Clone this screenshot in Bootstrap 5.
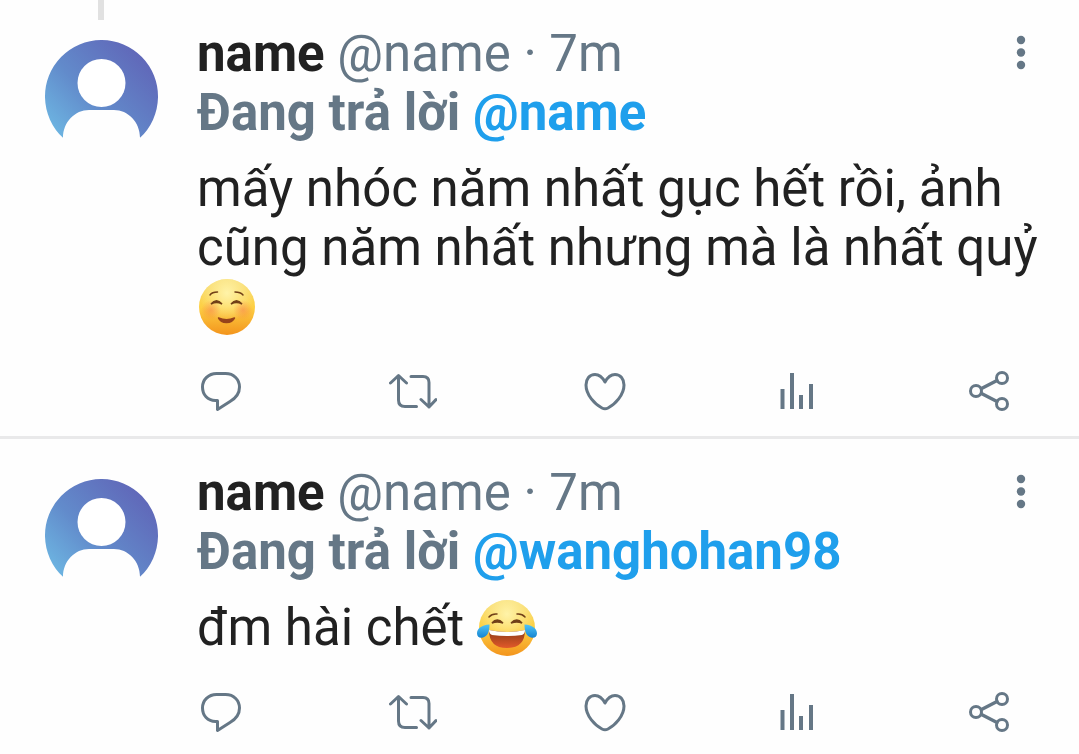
<!DOCTYPE html>
<html lang="vi">
<head>
<meta charset="utf-8">
<meta name="viewport" content="width=device-width, initial-scale=1">
<title>Replies</title>
<link href="https://cdn.jsdelivr.net/npm/bootstrap@5.3.0/dist/css/bootstrap.min.css" rel="stylesheet">
<style>
  body { font-family: Roboto, "Liberation Sans", sans-serif; font-size: 51px; line-height: 59px; color: #212121; background: #fefefe; overflow-x: hidden; }
  .tweet { padding: 24px 34px 21px 45px; border-bottom: 3px solid #e9e9ea; }
  .tweet:last-child { border-bottom: 0; }
  .tweet-avatar { width: 113px; margin: 16px 39px 0 0; }
  .thread-line { position: absolute; top: 0; left: 98px; width: 6px; height: 20px; background: #e1e1e1; }
  .muted-ink { color: #657786; }
  .mention { color: #1f9fec; }
  .tweet-body { margin-top: 17px; }
  .tweet-actions { margin: 31px 32px 0 0; }
  .icon-btn { color: #657786; background: none; border: 0; padding: 0; line-height: 0; }
  .icon-btn svg { fill: none; stroke: currentColor; stroke-width: 3; stroke-linecap: round; stroke-linejoin: round; }
  .more-btn { margin-top: 9px; width: 48px; }
  .emoji { width: 60px; height: 58px; vertical-align: -12px; }
</style>
</head>
<body>
<svg width="0" height="0" class="position-absolute" aria-hidden="true">
  <defs>
    <linearGradient id="avatarFill" x1="0" y1=".8" x2=".85" y2=".1"><stop offset="0" stop-color="#6cb2e0"/><stop offset=".4" stop-color="#628bcb"/><stop offset="1" stop-color="#6066b8"/></linearGradient>
    <linearGradient id="faceFill" x1="0" y1="0" x2="0" y2="1"><stop offset="0" stop-color="#f6da70"/><stop offset=".5" stop-color="#fdd044"/><stop offset="1" stop-color="#f3941c"/></linearGradient>
    <radialGradient id="faceGlow" cx=".5" cy=".25" r=".5"><stop offset="0" stop-color="#fff3a8"/><stop offset="1" stop-color="#fff3a8" stop-opacity="0"/></radialGradient>
    <radialGradient id="blush"><stop offset="0" stop-color="#f8804a" stop-opacity=".55"/><stop offset="1" stop-color="#f8804a" stop-opacity="0"/></radialGradient>
    <linearGradient id="mouthFill" x1="0" y1="0" x2="0" y2="1"><stop offset="0" stop-color="#8b3a16"/><stop offset="1" stop-color="#e2592a"/></linearGradient>
    <linearGradient id="tearFill" x1="0" y1="0" x2="0" y2="1"><stop offset="0" stop-color="#4fc3f7"/><stop offset="1" stop-color="#1584d0"/></linearGradient>
    <symbol id="avatar" viewBox="0 0 113 113">
      <path fill="url(#avatarFill)" d="M18 97.850A56.500 56.500 0 1 1 95 97.850C95 82 83 70 69 70H44C30 70 18 82 18 97.850Z"/>
      <circle cx="56.500" cy="43" r="24" fill="#fff"/>
    </symbol>
    <symbol id="more" viewBox="0 0 48 40"><g fill="currentColor" stroke="none"><circle cx="24" cy="7" r="4.200"/><circle cx="24" cy="19.500" r="4.200"/><circle cx="24" cy="32" r="4.200"/></g></symbol>
    <symbol id="reply" viewBox="0 0 48 48"><path d="M19.500 6.500H28.500C37 6.500 42.500 12.500 42.500 20C42.500 27 39 31 33 34.500L20.500 42.500V33.500H18.500C10.500 33.500 5.500 27.500 5.500 20C5.500 12.500 11.500 6.500 19.500 6.500Z"/></symbol>
    <symbol id="retweet" viewBox="0 0 48 48"><path d="M1.500 16L9.500 8.500L17.500 16M9.500 9V33Q9.500 39.500 16 39.500H27.500M22 9.500H34Q40 9.500 40 15.500V40M32 32.500L40 40L47 32.500"/></symbol>
    <symbol id="like" viewBox="0 0 48 48"><path d="M24 15C21 9.500 18 7.500 14 7.500C8.500 7.500 5 12 5 18C5 28 14 37.500 21 41Q24 42.500 27 41C34 37.500 43 28 43 18C43 12 39.500 7.500 34 7.500C30 7.500 27 9.500 24 15Z"/></symbol>
    <symbol id="stats" viewBox="0 0 48 48"><path stroke-linecap="butt" stroke-width="4" d="M9.500 22V42M19 6V42M28 28V42M38 17V42"/></symbol>
    <symbol id="share" viewBox="0 0 48 48"><circle cx="11" cy="24" r="5.500"/><circle cx="37" cy="11" r="5.500"/><circle cx="37" cy="37" r="5.500"/><path stroke-width="3.500" d="M16.500 21.500L32 13.500M16.500 26.500L32 34.500"/></symbol>
    <symbol id="smile" viewBox="0 0 60 58">
      <circle cx="30" cy="29" r="28" fill="url(#faceFill)"/><circle cx="30" cy="29" r="28" fill="url(#faceGlow)"/>
      <circle cx="14" cy="32" r="10" fill="url(#blush)"/><circle cx="46" cy="32" r="10" fill="url(#blush)"/>
      <g fill="none" stroke="#714018" stroke-linecap="round" stroke-width="1.500"><path d="M13 17Q15 14 20.500 14M38 14Q43.500 14 46 17"/><path fill="#714018" d="M14 26Q19.500 19.500 25 26Q19.500 23 14 26ZM34 26Q39.500 19.500 45 26Q39.500 23 34 26Z"/></g>
      <path fill="#96431b" stroke="#96431b" stroke-width="1.500" stroke-linejoin="round" d="M21.500 40Q29.500 43.500 37.500 40Q35.500 44.500 29.500 44.500Q23.500 44.500 21.500 40Z"/>
    </symbol>
    <symbol id="joy" viewBox="0 0 60 58">
      <circle cx="30" cy="29" r="28" fill="url(#faceFill)"/><circle cx="30" cy="29" r="28" fill="url(#faceGlow)"/>
      <g fill="none" stroke="#714018" stroke-linecap="round" stroke-width="1.500"><path d="M12 18Q15 14.500 20 15M40 15Q45 14.500 48 18"/><path fill="#714018" d="M15 24Q20 18 26 24Q20 22 15 24ZM34 24Q40 18 45 24Q40 22 34 24Z"/></g>
      <path fill="url(#mouthFill)" d="M12 31Q30 35 48 31Q48 49 30 49Q12 49 12 31Z"/>
      <path fill="#fff" d="M12 31Q30 35 48 31Q48 35 45 36Q30 38 15 36Q12 35 12 31Z"/>
      <path fill="url(#tearFill)" d="M12.500 25.500C4 26 0 30 0 34.500C0 38 3 39.500 6 38.500C11 37 12.500 32 12.500 25.500ZM47.500 25.500C56 26 60 30 60 34.500C60 38 57 39.500 54 38.500C49 37 47.500 32 47.500 25.500Z"/>
    </symbol>
  </defs>
</svg>
<main class="container-fluid p-0 position-relative">
  <div class="thread-line"></div>
  <article class="tweet d-flex align-items-start">
    <svg class="tweet-avatar flex-shrink-0" viewBox="0 0 113 113" role="img" aria-label="name"><use href="#avatar"/></svg>
    <div class="flex-grow-1">
      <header class="d-flex justify-content-between align-items-start">
        <div><strong>name</strong> <span class="muted-ink">@name · 7m</span></div>
        <button type="button" class="icon-btn more-btn" aria-label="More"><svg width="48" height="40"><use href="#more"/></svg></button>
      </header>
      <div class="fw-bold muted-ink">Đang trả lời <a href="#" class="mention text-decoration-none">@name</a></div>
      <div class="tweet-body">mấy nhóc năm nhất gục hết rồi, ảnh cũng năm nhất nhưng mà là nhất quỷ <svg class="emoji" role="img" aria-label="Smiling face"><use href="#smile"/></svg></div>
      <div class="tweet-actions d-flex justify-content-between">
        <button type="button" class="icon-btn" aria-label="Reply"><svg width="48" height="48"><use href="#reply"/></svg></button>
        <button type="button" class="icon-btn" aria-label="Retweet"><svg width="48" height="48"><use href="#retweet"/></svg></button>
        <button type="button" class="icon-btn" aria-label="Like"><svg width="48" height="48"><use href="#like"/></svg></button>
        <button type="button" class="icon-btn" aria-label="Statistics"><svg width="48" height="48"><use href="#stats"/></svg></button>
        <button type="button" class="icon-btn" aria-label="Share"><svg width="48" height="48"><use href="#share"/></svg></button>
      </div>
    </div>
  </article>
  <article class="tweet d-flex align-items-start">
    <svg class="tweet-avatar flex-shrink-0" viewBox="0 0 113 113" role="img" aria-label="name"><use href="#avatar"/></svg>
    <div class="flex-grow-1">
      <header class="d-flex justify-content-between align-items-start">
        <div><strong>name</strong> <span class="muted-ink">@name · 7m</span></div>
        <button type="button" class="icon-btn more-btn" aria-label="More"><svg width="48" height="40"><use href="#more"/></svg></button>
      </header>
      <div class="fw-bold muted-ink">Đang trả lời <a href="#" class="mention text-decoration-none">@wanghohan98</a></div>
      <div class="tweet-body">đm hài chết <svg class="emoji" role="img" aria-label="Face with tears of joy"><use href="#joy"/></svg></div>
      <div class="tweet-actions d-flex justify-content-between">
        <button type="button" class="icon-btn" aria-label="Reply"><svg width="48" height="48"><use href="#reply"/></svg></button>
        <button type="button" class="icon-btn" aria-label="Retweet"><svg width="48" height="48"><use href="#retweet"/></svg></button>
        <button type="button" class="icon-btn" aria-label="Like"><svg width="48" height="48"><use href="#like"/></svg></button>
        <button type="button" class="icon-btn" aria-label="Statistics"><svg width="48" height="48"><use href="#stats"/></svg></button>
        <button type="button" class="icon-btn" aria-label="Share"><svg width="48" height="48"><use href="#share"/></svg></button>
      </div>
    </div>
  </article>
</main>
<script src="https://cdn.jsdelivr.net/npm/bootstrap@5.3.0/dist/js/bootstrap.bundle.min.js"></script>
</body>
</html>
